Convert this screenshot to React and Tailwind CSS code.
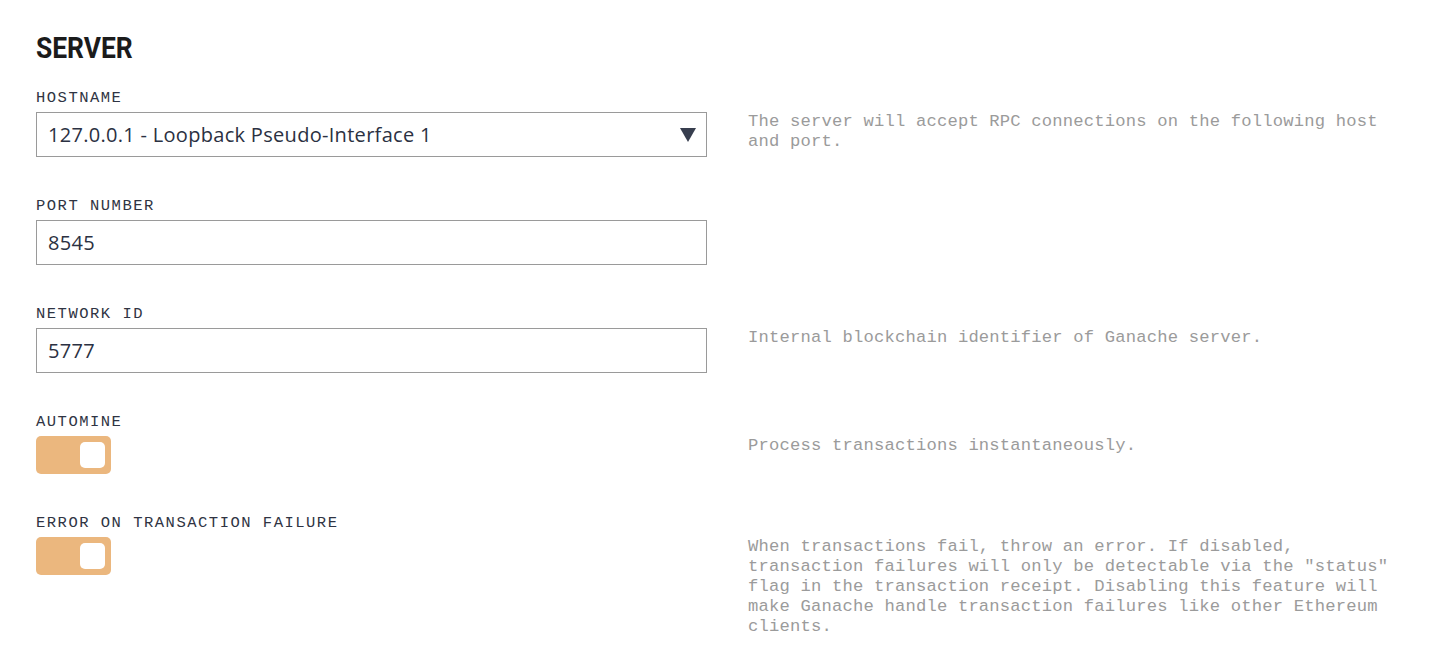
import React from "react";

const mono = { fontFamily: '"Liberation Mono", "DejaVu Sans Mono", monospace' };

function Label({ children }) {
  return (
    <div
      className="text-[15.5px] leading-[20px] tracking-[1.5px] text-[#2f3443] mb-[4px]"
      style={mono}
    >
      {children}
    </div>
  );
}

function Desc({ children }) {
  return (
    <div
      className="w-[656px] pt-[24px] text-[17.2px] leading-[20px] tracking-[0.18px] text-[#9b9b9b]"
      style={mono}
    >
      {children}
    </div>
  );
}

function TextBox({ value, select }) {
  return (
    <div className="h-[45px] w-[671px] border border-[#9a9a9a] bg-white flex items-center pl-[11px] pr-[10px]">
      <span
        className="flex-1 text-[20px] tracking-[0.3px] text-[#2b3142]"
        style={{ fontFamily: '"Open Sans", "Noto Sans", sans-serif' }}
      >
        {value}
      </span>
      {select && (
        <svg width="16" height="14" viewBox="0 0 16 14">
          <polygon points="0,0 16,0 8,14" fill="#373e4e" />
        </svg>
      )}
    </div>
  );
}

function Toggle() {
  return (
    <div className="h-[38px] w-[75px] rounded-[5px] bg-[#ebb77e] flex items-center justify-end pr-[6px]">
      <div className="h-[26px] w-[25px] rounded-[5px] bg-white" />
    </div>
  );
}

function Row({ label, control, desc, last }) {
  return (
    <div className={last ? "flex gap-[41px]" : "flex gap-[41px] mb-[39px]"}>
      <div className="w-[671px] shrink-0">
        <Label>{label}</Label>
        {control}
      </div>
      <Desc>{desc}</Desc>
    </div>
  );
}

export default function App() {
  return (
    <div className="min-h-[655px] bg-white px-[36px] pt-[30px]">
      <h1
        className="text-[30px] leading-[36px] font-bold text-[#1b1b1b] origin-left scale-x-[0.88] mb-[22px]"
        style={{ fontFamily: 'Roboto, "Liberation Sans", sans-serif' }}
      >
        SERVER
      </h1>
      <Row
        label="HOSTNAME"
        control={<TextBox value="127.0.0.1 - Loopback Pseudo-Interface 1" select />}
        desc="The server will accept RPC connections on the following host and port."
      />
      <Row label="PORT NUMBER" control={<TextBox value="8545" />} desc="" />
      <Row
        label="NETWORK ID"
        control={<TextBox value="5777" />}
        desc="Internal blockchain identifier of Ganache server."
      />
      <Row label="AUTOMINE" control={<Toggle />} desc="Process transactions instantaneously." />
      <Row
        last
        label="ERROR ON TRANSACTION FAILURE"
        control={<Toggle />}
        desc={
          'When transactions fail, throw an error. If disabled, transaction failures will only be detectable via the "status" flag in the transaction receipt. Disabling this feature will make Ganache handle transaction failures like other Ethereum clients.'
        }
      />
    </div>
  );
}
